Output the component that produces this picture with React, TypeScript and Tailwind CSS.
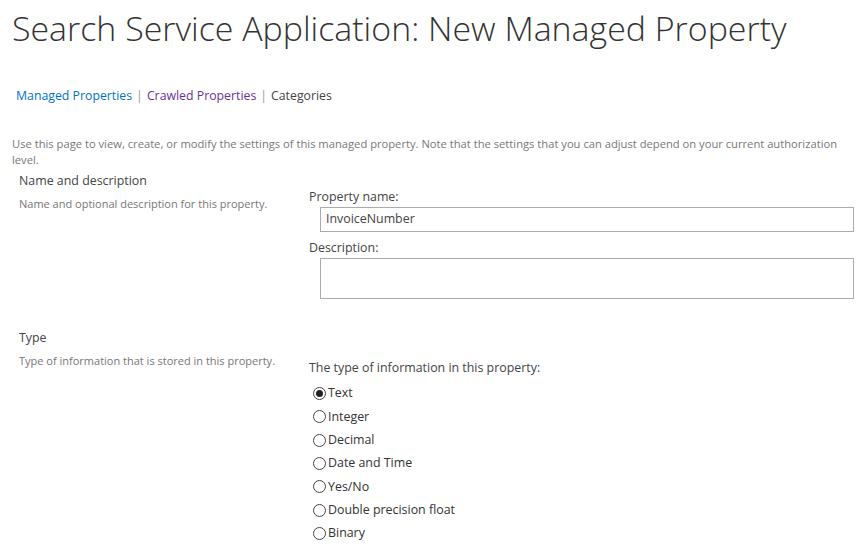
import React from "react";

const font = { fontFamily: '"Open Sans", "Noto Sans", sans-serif' };

function Radio({ label, checked }: { label: string; checked?: boolean }) {
  return (
    <div className="flex items-center h-[23.3px]">
      <span className="w-[13px] h-[13px] rounded-full border border-[#444] flex items-center justify-center ml-[4px] mr-[2px]">
        {checked && <span className="w-[7px] h-[7px] rounded-full bg-[#222]" />}
      </span>
      <span className="text-[12.4px] text-[#333]">{label}</span>
    </div>
  );
}

export default function App() {
  return (
    <div className="w-[861px] h-[558px] bg-white overflow-hidden" style={font}>
      <div className="pl-[12px] pt-[4px]">
        <h1 className="text-[33.9px] font-light leading-[48px] text-[#333] whitespace-nowrap">
          Search Service Application: New Managed Property
        </h1>
        <div className="mt-[34px] pl-[4px] text-[12.3px] leading-[20px] flex gap-[4px]">
          <span className="text-[#0072c6]">Managed Properties</span>
          <span className="text-[#999]">|</span>
          <span className="text-[#663399]">Crawled Properties</span>
          <span className="text-[#999]">|</span>
          <span className="text-[#444]">Categories</span>
        </div>
        <p className="mt-[30px] text-[11.2px] leading-[16px] text-[#777] pr-[20px]">
          Use this page to view, create, or modify the settings of this managed property. Note that the settings that you can adjust depend on your current authorization level.
        </p>
        <div className="flex mt-[4px]">
          <div className="w-[297px] pl-[7px]">
            <div className="text-[12.4px] leading-[18px] text-[#444]">Name and description</div>
            <div className="mt-[6px] text-[11px] leading-[16px] text-[#777]">Name and optional description for this property.</div>
          </div>
          <div className="flex-1 pt-[16px] pr-[7px]">
            <div className="text-[12.4px] leading-[18px] text-[#444]">Property name:</div>
            <div className="ml-[11px] mt-[1px] h-[25px] border border-[#ababab] flex items-center px-[5px] text-[12.4px] text-[#444]">InvoiceNumber</div>
            <div className="mt-[7px] text-[12.4px] leading-[18px] text-[#444]">Description:</div>
            <div className="ml-[11px] mt-[1px] h-[41px] border border-[#ababab]" />
          </div>
        </div>
        <div className="flex mt-[30px]">
          <div className="w-[297px] pl-[7px]">
            <div className="text-[12.4px] leading-[18px] text-[#444]">Type</div>
            <div className="mt-[6px] text-[11px] leading-[16px] text-[#777]">Type of information that is stored in this property.</div>
          </div>
          <div className="flex-1 pt-[30px]">
            <div className="text-[12.4px] leading-[18px] text-[#444] mb-[5px]">The type of information in this property:</div>
            <Radio label="Text" checked />
            <Radio label="Integer" />
            <Radio label="Decimal" />
            <Radio label="Date and Time" />
            <Radio label="Yes/No" />
            <Radio label="Double precision float" />
            <Radio label="Binary" />
          </div>
        </div>
      </div>
    </div>
  );
}
